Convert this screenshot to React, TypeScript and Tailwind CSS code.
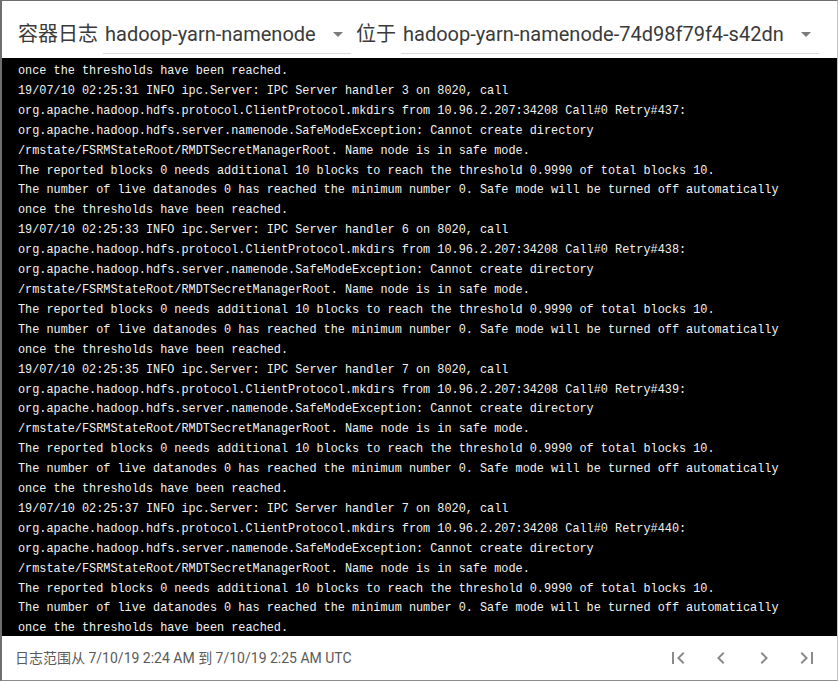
const blocks = [
  { time: "02:25:31", handler: 3, retry: 437 },
  { time: "02:25:33", handler: 6, retry: 438 },
  { time: "02:25:35", handler: 7, retry: 439 },
  { time: "02:25:37", handler: 7, retry: 440 },
];

const lines: string[] = ["once the thresholds have been reached."];
blocks.forEach((b) => {
  lines.push(
    `19/07/10 ${b.time} INFO ipc.Server: IPC Server handler ${b.handler} on 8020, call`,
    `org.apache.hadoop.hdfs.protocol.ClientProtocol.mkdirs from 10.96.2.207:34208 Call#0 Retry#${b.retry}:`,
    "org.apache.hadoop.hdfs.server.namenode.SafeModeException: Cannot create directory",
    "/rmstate/FSRMStateRoot/RMDTSecretManagerRoot. Name node is in safe mode.",
    "The reported blocks 0 needs additional 10 blocks to reach the threshold 0.9990 of total blocks 10.",
    "The number of live datanodes 0 has reached the minimum number 0. Safe mode will be turned off automatically",
    "once the thresholds have been reached."
  );
});

const sans = "font-['Roboto','Noto_Sans_CJK_SC',sans-serif]";

function Select({ value, width }: { value: string; width: string }) {
  return (
    <div className={`flex ${width} h-[40px] items-center justify-between border-b border-[#d9d9d9] pl-[2px] pr-[8px]`}>
      <span className="text-[20px] text-[#3a3a3a]">{value}</span>
      <svg width="10" height="5" viewBox="0 0 10 5" className="mt-[1px]">
        <path d="M0 0l5 5 5-5z" fill="#7a7a7a" />
      </svg>
    </div>
  );
}

function Icon({ d }: { d: string }) {
  return (
    <button className="flex h-[40px] w-[40px] items-center justify-center">
      <svg width="24" height="24" viewBox="0 0 24 24">
        <path d={d} fill="#8a8a8a" />
      </svg>
    </button>
  );
}

export default function App() {
  return (
    <div className="h-[682px] w-[840px] bg-white">
      <div className={`flex h-[681px] w-[838px] flex-col border-t border-l-2 border-r border-b border-t-[#6f6f6f] border-l-[#6f6f6f] border-r-[#c4c4c4] border-b-[#8c8c8c] bg-white ${sans}`}>
        <div className="flex h-[57px] items-start pt-[13px] pl-[16px]">
          <span className="mr-[5px] mt-[7px] text-[20px] leading-[26px] text-[#3a3a3a]">容器日志</span>
          <Select value="hadoop-yarn-namenode" width="w-[248px]" />
          <span className="ml-[5px] mr-[5px] mt-[7px] text-[20px] leading-[26px] text-[#3a3a3a]">位于</span>
          <Select value="hadoop-yarn-namenode-74d98f79f4-s42dn" width="w-[418px]" />
        </div>
        <div className="h-[578px] overflow-hidden bg-black pl-[16px] pt-[4px] font-['Liberation_Mono',monospace] text-[11.85px] leading-[19.9px] text-[#f2f2f2]">
          {lines.map((l, i) => (
            <div key={i} className="whitespace-pre">{l}</div>
          ))}
        </div>
        <div className="flex flex-1 items-center justify-between pl-[13px] pr-[10px]">
          <span className="text-[14px] text-[#5a5a5a]">日志范围从 7/10/19 2:24 AM 到 7/10/19 2:25 AM UTC</span>
          <div className="flex gap-[3px]">
            <Icon d="M18.41 16.59L13.82 12l4.59-4.59L17 6l-6 6 6 6zM6 6h2v12H6z" />
            <Icon d="M15.41 7.41L14 6l-6 6 6 6 1.41-1.41L10.83 12z" />
            <Icon d="M10 6L8.59 7.41 13.17 12l-4.58 4.59L10 18l6-6z" />
            <Icon d="M5.59 7.41L10.18 12l-4.59 4.59L7 18l6-6-6-6zM16 6h2v12h-2z" />
          </div>
        </div>
      </div>
    </div>
  );
}
